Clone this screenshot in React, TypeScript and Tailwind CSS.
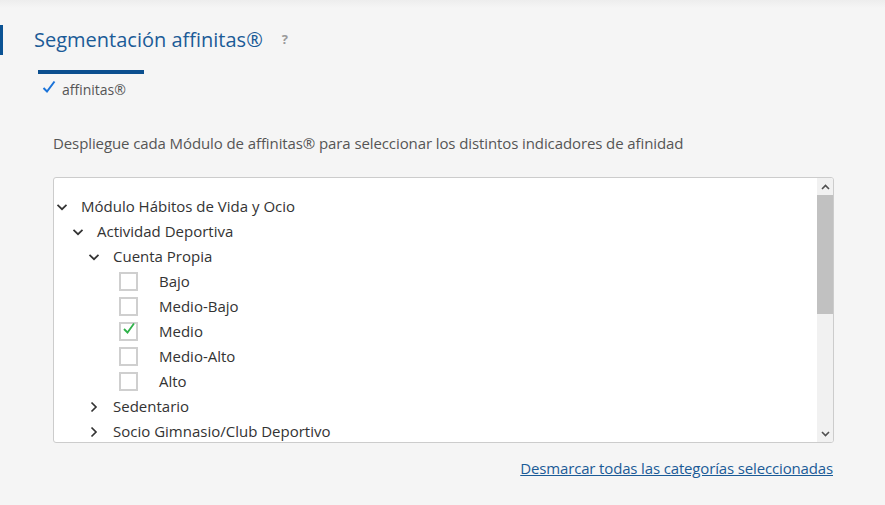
import React from "react";

const font = { fontFamily: '"Open Sans", "Noto Sans", sans-serif' };

function ChevronDown() {
  return (
    <svg width="12" height="8" viewBox="0 0 12 8" className="shrink-0">
      <path d="M1.5 1.8 L6 6.2 L10.5 1.8" fill="none" stroke="#333" strokeWidth="1.7" />
    </svg>
  );
}
function ChevronRight() {
  return (
    <svg width="12" height="12" viewBox="0 0 12 12" className="shrink-0">
      <path d="M3.5 1.5 L8 6 L3.5 10.5" fill="none" stroke="#333" strokeWidth="1.7" />
    </svg>
  );
}

function Branch({ indent, open, label }: { indent: number; open: boolean; label: string }) {
  return (
    <div className="flex h-[25px] items-center" style={{ paddingLeft: indent }}>
      <div className="flex w-[25px] items-center justify-start">{open ? <ChevronDown /> : <ChevronRight />}</div>
      <span className="text-[15px] text-[#333]">{label}</span>
    </div>
  );
}

function Leaf({ label, checked }: { label: string; checked?: boolean }) {
  return (
    <div className="flex h-[25px] items-center pl-[65px]">
      <div className="relative h-[19px] w-[19px] border-2 border-[#cfcfcf] bg-white">
        {checked && (
          <svg width="16" height="14" viewBox="0 0 16 14" className="absolute left-[0px] top-[-3px]">
            <path d="M3 8 L6.5 11.5 L13 2.5" fill="none" stroke="#2fb24a" strokeWidth="1.8" />
          </svg>
        )}
      </div>
      <span className="ml-[21px] text-[15px] text-[#333]">{label}</span>
    </div>
  );
}

export default function App() {
  return (
    <div className="h-[505px] w-[885px] overflow-hidden bg-[#f5f5f5]" style={font}>
      <div className="h-[8px] bg-gradient-to-b from-[#ededed] to-[#f5f5f5]" />
      <div className="mt-[17px] flex h-[30px] items-center">
        <div className="h-[30px] w-[3px] bg-[#0b5394]" />
        <span className="ml-[31px] text-[20px] leading-none text-[#1b5b97]">Segmentación affinitas®</span>
        <span className="ml-[19px] text-[13px] font-bold text-[#9a9a9a]">?</span>
      </div>
      <div className="ml-[38px] mt-[15px] w-[106px] border-t-4 border-[#0b4f8f]" />
      <div className="ml-[42px] mt-[4px] flex h-[18px] items-center">
        <svg width="14" height="14" viewBox="0 0 14 14">
          <path d="M1.5 8 L5 11.5 L12.5 1.5" fill="none" stroke="#1a73d9" strokeWidth="2" />
        </svg>
        <span className="ml-[6px] mt-[4px] text-[14px] text-[#555]">affinitas®</span>
      </div>
      <p className="ml-[53px] mt-[38px] text-[15px] leading-[18px] tracking-[-0.1px] text-[#555]">
        Despliegue cada Módulo de affinitas® para seleccionar los distintos indicadores de afinidad
      </p>
      <div className="ml-[53px] mt-[25px] flex h-[266px] w-[781px] overflow-hidden rounded-[3px] border border-[#cccccc] bg-white">
        <div className="flex-1 pt-[16px]">
          <Branch indent={2} open label="Módulo Hábitos de Vida y Ocio" />
          <Branch indent={18} open label="Actividad Deportiva" />
          <Branch indent={34} open label="Cuenta Propia" />
          <Leaf label="Bajo" />
          <Leaf label="Medio-Bajo" />
          <Leaf label="Medio" checked />
          <Leaf label="Medio-Alto" />
          <Leaf label="Alto" />
          <Branch indent={34} open={false} label="Sedentario" />
          <Branch indent={34} open={false} label="Socio Gimnasio/Club Deportivo" />
        </div>
        <div className="flex w-[16px] flex-col bg-[#f1f1f1]">
          <div className="flex h-[17px] items-center justify-center">
            <svg width="9" height="6" viewBox="0 0 9 6">
              <path d="M1 5 L4.5 1.5 L8 5" fill="none" stroke="#505050" strokeWidth="1.6" />
            </svg>
          </div>
          <div className="h-[119px] bg-[#c1c1c1]" />
          <div className="flex-1" />
          <div className="flex h-[17px] items-center justify-center">
            <svg width="9" height="6" viewBox="0 0 9 6">
              <path d="M1 1 L4.5 4.5 L8 1" fill="none" stroke="#505050" strokeWidth="1.6" />
            </svg>
          </div>
        </div>
      </div>
      <div className="mr-[52px] mt-[14px] flex justify-end">
        <a href="#" className="text-[15px] tracking-[-0.15px] text-[#1b5b97] underline">
          Desmarcar todas las categorías seleccionadas
        </a>
      </div>
    </div>
  );
}
